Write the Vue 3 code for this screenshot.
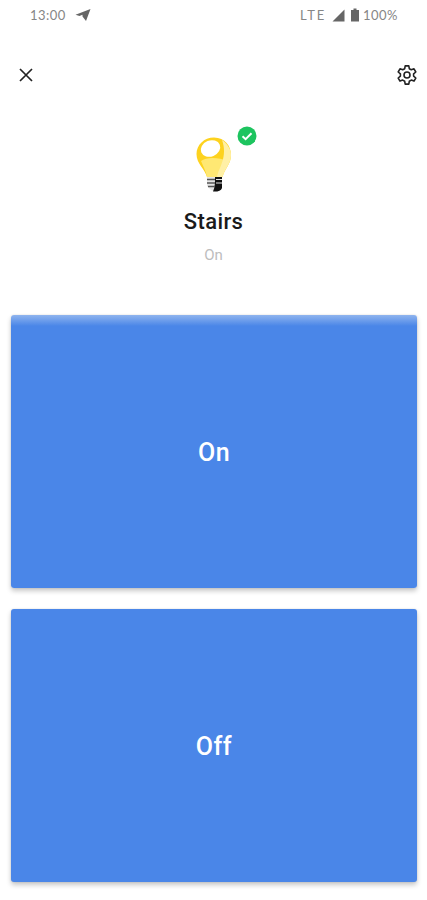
<script setup>
const buttons = ['On', 'Off']
</script>

<template>
  <div class="screen">
    <div class="status">
      <div class="status-left">
        <span>13:00</span>
        <svg class="plane" width="16" height="14" viewBox="0 0 16 14">
          <path d="M15.500 1 L0.500 6.800 L4.500 8 L7.500 6.800 L7.500 8.500 L11 13 Z" fill="#666" />
        </svg>
      </div>
      <div class="status-right">
        <span class="lte">LTE</span>
        <svg class="signal" width="13" height="13" viewBox="0 0 13 13">
          <path d="M12.500 0.500 V12.500 H0.500 Z" fill="#666" />
        </svg>
        <svg class="battery" width="10" height="14" viewBox="0 0 10 14">
          <path d="M3.500 0.500 H6.500 V2 H9 V13.500 H1 V2 H3.500 Z" fill="#666" />
        </svg>
        <span class="level">100%</span>
      </div>
    </div>

    <div class="toolbar">
      <svg width="24" height="24" viewBox="0 0 24 24">
        <path d="M6 6 L18 18 M18 6 L6 18" stroke="#222" stroke-width="1.700" fill="none" />
      </svg>
      <svg width="24" height="24" viewBox="0 0 24 24">
        <path
          d="M10.200 2.500 H13.800 L14.300 5.300 L16.300 6.400 L19 5.400 L20.800 8.600 L18.600 10.400 V12.700 L20.800 14.600 L19 17.700 L16.300 16.700 L14.300 17.900 L13.800 20.700 H10.200 L9.700 17.900 L7.700 16.700 L5 17.700 L3.200 14.600 L5.400 12.700 V10.400 L3.200 8.600 L5 5.400 L7.700 6.400 L9.700 5.300 Z"
          transform="translate(0 0.400)"
          stroke="#222" stroke-width="1.600" stroke-linejoin="round" fill="none"
        />
        <circle cx="12" cy="12" r="3" stroke="#222" stroke-width="1.600" fill="none" />
      </svg>
    </div>

    <div class="device">
      <div class="icon-wrap">
        <svg class="bulb" width="60" height="68" viewBox="0 0 60 68">
          <path
            d="M30 4.500 C41 4.500 47 13 47 22 C47 31 41 35 38.500 44 H23 C21 36 12.500 31 12.500 21 C12.500 12 20 4.500 30 4.500 Z"
            fill="#fdd21e"
          />
          <path d="M17 28 C22 24 34 24 44 28 C42 33 39.500 38 38.500 44 H23 C22 38 19 33 17 28 Z" fill="#ffe873" />
          <path d="M38 7 C44 11 47 17 47 22 C47 31 41 35 38.500 44 H33 C35 34 44 24 38 7 Z" fill="#fff0a6" />
          <ellipse cx="26.500" cy="15.500" rx="10" ry="8" transform="rotate(-22 26.500 15.500)" fill="#fff" />
          <path d="M23 44 H38 V55 C36 59 28 59 26 56 L23 53 Z" fill="#e4e4e4" />
          <path d="M31 44 H38 V55 C37 58 33 59 29 58.500 C31 54 31 50 31 44 Z" fill="#111" />
          <path d="M23 46.500 H31 M23 50 H31 M24 53.500 H31" stroke="#555" stroke-width="1.300" fill="none" />
          <path d="M32 46.500 H38 M32 50 H38" stroke="#e8e8e8" stroke-width="1" fill="none" />
        </svg>
        <svg class="badge" width="20" height="20" viewBox="0 0 20 20">
          <circle cx="10" cy="10" r="9.500" fill="#1dc45f" />
          <path d="M5.500 10.300 L8.600 13.200 L14.500 7.300" stroke="#fff" stroke-width="2" fill="none" />
        </svg>
      </div>
      <div class="name">Stairs</div>
      <div class="state">On</div>
    </div>

    <div class="actions">
      <button v-for="label in buttons" :key="label" class="action">{{ label }}</button>
    </div>
  </div>
</template>

<style scoped>
.screen {
  width: 427px;
  height: 900px;
  background: #fff;
  font-family: Roboto, "Liberation Sans", sans-serif;
  overflow: hidden;
}

.status {
  height: 30px;
  padding: 0 29px 0 30px;
  display: flex;
  justify-content: space-between;
  align-items: center;
  font-family: Lato, Roboto, sans-serif;
  font-size: 13px;
  color: #868686;
  letter-spacing: 0.5px;
}

.status-left,
.status-right {
  display: flex;
  align-items: center;
}

.plane {
  margin-left: 9px;
}

.lte {
  letter-spacing: 1.800px;
}

.signal {
  margin-left: 6px;
}

.battery {
  margin-left: 5px;
}

.level {
  margin-left: 3px;
}

.toolbar {
  margin-top: 33px;
  padding: 0 8px 0 14px;
  height: 24px;
  display: flex;
  justify-content: space-between;
}

.device {
  margin-top: 46px;
  display: flex;
  flex-direction: column;
  align-items: center;
}

.icon-wrap {
  position: relative;
  width: 60px;
  height: 68px;
  margin-left: 1px;
}

.bulb {
  display: block;
  filter: blur(0.400px);
}

.badge {
  position: absolute;
  left: 53px;
  top: -7px;
}

.name {
  margin-top: 7px;
  font-size: 22px;
  font-weight: 500;
  line-height: 28px;
  letter-spacing: 0.400px;
  color: #1a1a1a;
}

.state {
  margin-top: 10px;
  font-size: 15px;
  line-height: 18px;
  color: #bdbdbd;
}

.actions {
  margin-top: 51px;
  padding: 0 10px 0 11px;
  display: flex;
  flex-direction: column;
  gap: 21px;
}

.action {
  display: block;
  width: 100%;
  height: 273px;
  border: 0;
  padding: 1px 0 0;
  border-radius: 3px;
  background: #4a86e8;
  color: #fff;
  font-family: Roboto, "Liberation Sans", sans-serif;
  font-size: 25px;
  font-weight: 500;
  letter-spacing: 0.500px;
  box-shadow: 0 3px 5px rgba(0, 0, 0, 0.22), 0 0 2px rgba(0, 0, 0, 0.12);
}

.action:first-child {
  background: linear-gradient(#8fb4ee 0, #4a86e8 11px);
}
</style>

<style>
body {
  background: #fff;
}
</style>
